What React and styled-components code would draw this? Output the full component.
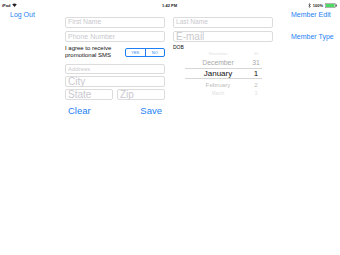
import React from "react";
import styled, { createGlobalStyle } from "styled-components";

const blue = "#1d7ff3";

const GlobalStyle = createGlobalStyle`
  html, body {
    margin: 0;
    padding: 0;
    background: #fff;
  }
  body {
    font-family: "Liberation Sans", Arial, sans-serif;
    -webkit-font-smoothing: antialiased;
  }
`;

const Screen = styled.div`
  width: 340px;
  height: 255px;
  background: #fff;
  overflow: hidden;
`;

const StatusBar = styled.div`
  height: 10px;
  display: grid;
  grid-template-columns: 1fr auto 1fr;
  align-items: center;
  padding: 0 3px 0 2px;
  font-size: 4px;
  font-weight: 700;
  color: #222;
`;

const StatusSide = styled.div`
  display: flex;
  align-items: center;
  gap: 2px;
  justify-content: ${(p) => (p.$right ? "flex-end" : "flex-start")};
`;

const Body = styled.div`
  display: flex;
`;

const NavColumn = styled.div`
  display: flex;
  flex-direction: column;
  width: ${(p) => p.$width}px;
  padding-left: ${(p) => p.$inset}px;
  padding-top: 1px;
  box-sizing: border-box;
`;

const NavLink = styled.div`
  font-size: 7px;
  line-height: 8px;
  color: ${blue};
  white-space: nowrap;
  margin-bottom: ${(p) => p.$after || 0}px;
`;

const FormColumn = styled.div`
  width: 100px;
  margin-right: ${(p) => p.$after || 0}px;
  padding-top: 7px;
  display: flex;
  flex-direction: column;
`;

const Field = styled.div`
  box-sizing: border-box;
  height: ${(p) => p.$h}px;
  border: 1px solid #dcdcdc;
  border-radius: 2px;
  padding-left: 2px;
  display: flex;
  align-items: center;
  font-size: ${(p) => p.$size}px;
  line-height: 1;
  color: #c9c9ce;
  margin-bottom: ${(p) => p.$after || 0}px;
  flex: ${(p) => (p.$grow ? 1 : "none")};
  white-space: nowrap;
`;

const Row = styled.div`
  display: flex;
  align-items: ${(p) => p.$align || "stretch"};
  justify-content: space-between;
  gap: ${(p) => p.$gap || 0}px;
  margin-bottom: ${(p) => p.$after || 0}px;
`;

const Consent = styled.div`
  font-size: 6px;
  line-height: 7px;
  color: #111;
`;

const Segmented = styled.div`
  display: flex;
  width: 40px;
  height: 9px;
  box-sizing: border-box;
  border: 1px solid ${blue};
  border-radius: 2px;
  margin-top: 3px;
`;

const Segment = styled.div`
  flex: 1;
  display: flex;
  align-items: center;
  justify-content: center;
  font-size: 4px;
  color: ${blue};
  border-left: ${(p) => (p.$first ? "none" : `1px solid ${blue}`)};
`;

const ActionButton = styled.div`
  font-size: 9.5px;
  line-height: 11px;
  color: ${blue};
  padding: 0 3px;
`;

const Label = styled.div`
  font-size: 5px;
  line-height: 5px;
  color: #111;
  margin-top: 3px;
`;

const Picker = styled.div`
  margin-left: 12px;
  width: 77px;
`;

const PickerRow = styled.div`
  height: ${(p) => p.$h}px;
  display: flex;
  align-items: center;
  font-size: ${(p) => p.$size}px;
  color: ${(p) => p.$color};
  border-top: ${(p) => (p.$selected ? "1px solid #d6d6d6" : "none")};
  border-bottom: ${(p) => (p.$selected ? "1px solid #d6d6d6" : "none")};
  box-sizing: border-box;
`;

const Month = styled.span`
  width: 66px;
  text-align: center;
`;

const Day = styled.span`
  width: 10px;
  text-align: center;
`;

const wheel = [
  { month: "November", day: "30", h: 6, size: 4, color: "#e2e2e2" },
  { month: "December", day: "31", h: 12, size: 6.8, color: "#a8a8a8" },
  { month: "January", day: "1", h: 11, size: 8, color: "#111", selected: true },
  { month: "February", day: "2", h: 10, size: 6.2, color: "#bdbdbd" },
  { month: "March", day: "3", h: 8, size: 4.5, color: "#e0e0e0" },
];

const Wifi = () => (
  <svg width="5" height="4" viewBox="0 0 10 8">
    <path d="M5 8 L0.5 3 A6.5 6.5 0 0 1 9.5 3 Z" fill="#222" />
  </svg>
);

const Bluetooth = () => (
  <svg width="3" height="5" viewBox="0 0 6 10">
    <path d="M1 3 L5 7 L3 9 V1 L5 3 L1 7" fill="none" stroke="#222" strokeWidth="1" />
  </svg>
);

const Battery = () => (
  <svg width="12" height="5" viewBox="0 0 24 10">
    <rect x="0.5" y="0.5" width="20" height="9" rx="1.5" fill="none" stroke="#333" />
    <rect x="2" y="2" width="17" height="6" fill="#4cd964" />
    <rect x="21.5" y="3" width="2" height="4" fill="#333" />
  </svg>
);

export default function App() {
  return (
    <Screen>
      <GlobalStyle />
      <StatusBar>
        <StatusSide>
          iPad <Wifi />
        </StatusSide>
        <span>1:42 PM</span>
        <StatusSide $right>
          <Bluetooth />
          100%
          <Battery />
        </StatusSide>
      </StatusBar>
      <Body>
        <NavColumn $width={65} $inset={10}>
          <NavLink>Log Out</NavLink>
        </NavColumn>
        <FormColumn $after={8}>
          <Field $h={11} $size={6.8} $after={3}>First Name</Field>
          <Field $h={11} $size={7} $after={3}>Phone Number</Field>
          <Row $after={5}>
            <Consent>
              I agree to receive
              <br />
              promotional SMS
            </Consent>
            <Segmented>
              <Segment $first>YES</Segment>
              <Segment>NO</Segment>
            </Segmented>
          </Row>
          <Field $h={10} $size={6} $after={2}>Address</Field>
          <Field $h={11} $size={10} $after={2}>City</Field>
          <Row $gap={4} $after={5}>
            <Field $h={11} $size={10} $grow>State</Field>
            <Field $h={11} $size={10} $grow>Zip</Field>
          </Row>
          <Row>
            <ActionButton>Clear</ActionButton>
            <ActionButton>Save</ActionButton>
          </Row>
        </FormColumn>
        <FormColumn $after={18}>
          <Field $h={11} $size={6.6} $after={3}>Last Name</Field>
          <Field $h={11} $size={10}>E-mail</Field>
          <Label>DOB</Label>
          <Picker>
            {wheel.map((r) => (
              <PickerRow key={r.month} $h={r.h} $size={r.size} $color={r.color} $selected={r.selected}>
                <Month>{r.month}</Month>
                <Day>{r.day}</Day>
              </PickerRow>
            ))}
          </Picker>
        </FormColumn>
        <NavColumn $width={49} $inset={0}>
          <NavLink $after={14}>Member Edit</NavLink>
          <NavLink>Member Type</NavLink>
        </NavColumn>
      </Body>
    </Screen>
  );
}
